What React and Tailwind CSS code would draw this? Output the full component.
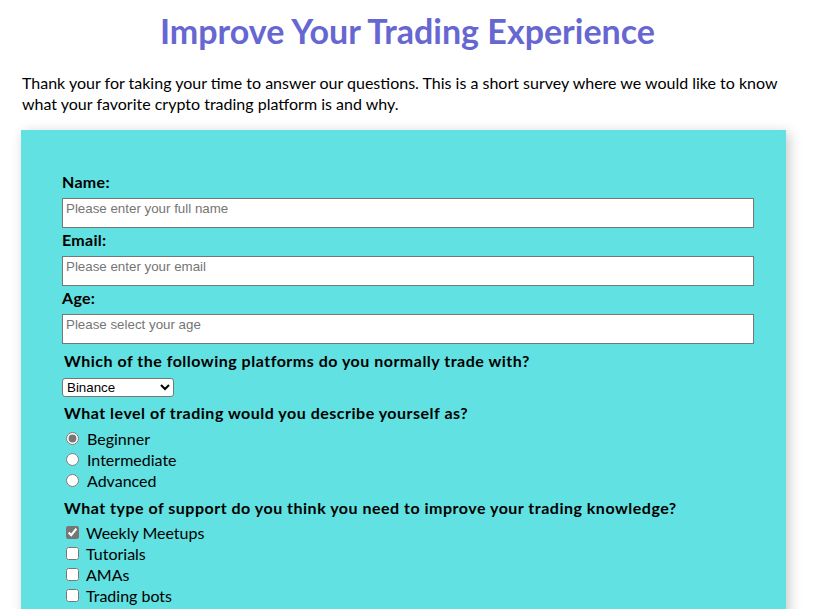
const levels = ['Beginner', 'Intermediate', 'Advanced'];
const supports = ['Weekly Meetups', 'Tutorials', 'AMAs', 'Trading bots'];

function TextField({ label, placeholder }) {
    return (
        <div>
            <label className="block h-[22px] leading-[24px] font-bold tracking-[0.3px]">{label}</label>
            <input
                type="text"
                placeholder={placeholder}
                className="mt-[6px] block box-border w-[692px] h-[30px] pt-0 pb-[10px] px-[3px] bg-white border border-[#767676] font-['Liberation_Sans',Arial,sans-serif] text-[13.33px] text-black placeholder:text-[#757575] outline-none"
            />
        </div>
    );
}

export default function App() {
    return (
        <div className="min-h-[609px] bg-white text-black font-['Lato',sans-serif] text-[16px]">
            <h1 className="pt-[11px] text-center text-[34px] leading-[40px] font-bold text-[#6767d1]">
                Improve Your Trading Experience
            </h1>
            <p className="mt-[21px] ml-[22px] mr-[28px] leading-[21px]">
                Thank your for taking your time to answer our questions. This is a short survey where we would like to know what your favorite crypto trading platform is and why.
            </p>
            <form className="mt-[16px] ml-[21px] w-[765px] bg-[#61e1e1] pt-[40px] pl-[41px] pb-[40px] shadow-[3px_3px_12px_rgba(0,0,0,0.22)]">
                <TextField label="Name:" placeholder="Please enter your full name" />
                <TextField label="Email:" placeholder="Please enter your email" />
                <TextField label="Age:" placeholder="Please select your age" />

                <p className="mt-[6px] ml-[2px] leading-[21px] font-bold tracking-[0.5px]">Which of the following platforms do you normally trade with?</p>
                <select className="mt-[7px] block w-[112px] h-[19px] bg-white border border-[#767676] rounded-[3px] font-['Liberation_Sans',Arial,sans-serif] text-[13.33px] leading-[15px] text-black">
                    <option>Binance</option>
                    <option>Coinbase</option>
                    <option>Kraken</option>
                    <option>KuCoin</option>
                </select>

                <p className="mt-[5px] ml-[2px] leading-[21px] font-bold tracking-[0.5px]">What level of trading would you describe yourself as?</p>
                <div className="mt-[5px]">
                    {levels.map((lvl, i) => (
                        <label key={lvl} className="flex items-center h-[21px]">
                            <input type="radio" name="level" defaultChecked={i === 0} className="m-0 ml-[4px] mr-[8px] w-[13px] h-[13px] accent-[#767676]" />
                            {lvl}
                        </label>
                    ))}
                </div>

                <p className="mt-[6px] ml-[2px] leading-[21px] font-bold tracking-[0.5px]">What type of support do you think you need to improve your trading knowledge?</p>
                <div className="mt-[4px]">
                    {supports.map((s, i) => (
                        <label key={s} className="flex items-center h-[21px]">
                            <input type="checkbox" defaultChecked={i === 0} className="m-0 ml-[4px] mr-[7px] w-[13px] h-[13px] accent-[#767676]" />
                            {s}
                        </label>
                    ))}
                </div>
            </form>
        </div>
    );
}
